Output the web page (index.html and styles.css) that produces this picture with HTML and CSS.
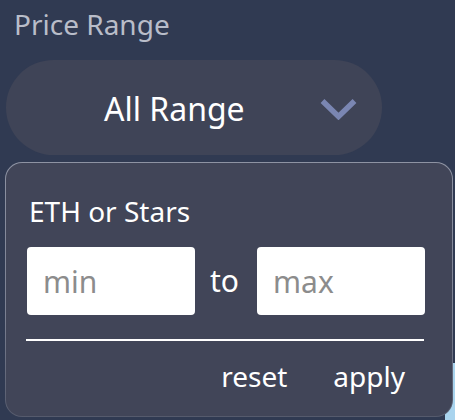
FILE: index.html
```html
<!DOCTYPE html>
<html>
<head>
<meta charset="utf-8">
<link rel="stylesheet" href="styles.css">
</head>
<body>
<div class="backdrop"></div>
<div class="filter">
  <div class="filter-title">Price Range</div>
  <div class="select">
    <span class="select-value">All Range</span>
    <svg class="chevron" width="37" height="22" viewBox="0 0 37 22">
      <path d="M2.5 3 L18.5 18.5 L34.5 3" fill="none" stroke="#7a86b2" stroke-width="5.5" stroke-linecap="butt" stroke-linejoin="miter"/>
    </svg>
  </div>
  <div class="panel">
    <div class="panel-label">ETH or Stars</div>
    <div class="range-row">
      <input class="range-input" type="text" placeholder="min">
      <span class="range-to">to</span>
      <input class="range-input" type="text" placeholder="max">
    </div>
    <div class="divider"></div>
    <div class="actions">
      <span class="action">reset</span>
      <span class="action">apply</span>
    </div>
  </div>
</div>
</body>
</html>
```
FILE: styles.css
```css
html, body {
  margin: 0;
  padding: 0;
}
body {
  width: 455px;
  height: 420px;
  overflow: hidden;
  background: #303a52;
  font-family: "Noto Sans", "Open Sans", sans-serif;
  position: relative;
}
.backdrop {
  position: absolute;
  right: 0;
  top: 363px;
  width: 10px;
  height: 57px;
  background: #a9d4ee;
}
.filter {
  position: relative;
  padding: 5px 2px 0 5px;
}
.filter-title {
  font-size: 28px;
  line-height: 38px;
  color: #b9bdc9;
  padding-left: 9px;
}
.select {
  margin-top: 17px;
  margin-left: 1px;
  width: 376px;
  height: 95px;
  border-radius: 48px;
  background: #3f4457;
  display: flex;
  align-items: center;
  box-sizing: border-box;
  padding-left: 98px;
  padding-right: 25px;
}
.select-value {
  font-size: 32px;
  line-height: 44px;
  color: #ffffff;
  margin-top: 2px;
}
.chevron {
  margin-left: auto;
  display: block;
  margin-top: 2px;
}
.panel {
  margin-top: 7px;
  width: 448px;
  height: 255px;
  box-sizing: border-box;
  border: 1.5px solid transparent;
  border-radius: 17px;
  background:
    linear-gradient(#414558, #414558) padding-box,
    linear-gradient(to bottom, #8e93a3 0%, #7b8092 60%, #555a6c 100%) border-box;
  padding: 29px 27px 0 21px;
}
.panel-label {
  font-size: 28px;
  line-height: 38px;
  color: #ffffff;
  padding-left: 2px;
}
.range-row {
  margin-top: 17px;
  display: flex;
  align-items: center;
}
.range-input {
  width: 168px;
  height: 68px;
  box-sizing: border-box;
  border: none;
  border-radius: 4px;
  background: #ffffff;
  padding: 0 0 0 16px;
  font-family: "Noto Sans", "Open Sans", sans-serif;
  font-size: 30px;
  color: #333;
  outline: none;
}
.range-input::placeholder {
  color: #8c8c8c;
}
.range-to {
  font-size: 30px;
  line-height: 40px;
  color: #ffffff;
  margin: 0 15px 0 15px;
  width: 32px;
}
.divider {
  margin-top: 24px;
  height: 2px;
  width: 398px;
  margin-left: -1px;
  background: #ffffff;
}
.actions {
  margin-top: 16px;
  display: flex;
  justify-content: flex-end;
  gap: 46px;
  padding-right: 20px;
}
.action {
  font-size: 28px;
  line-height: 38px;
  color: #ffffff;
}
```
